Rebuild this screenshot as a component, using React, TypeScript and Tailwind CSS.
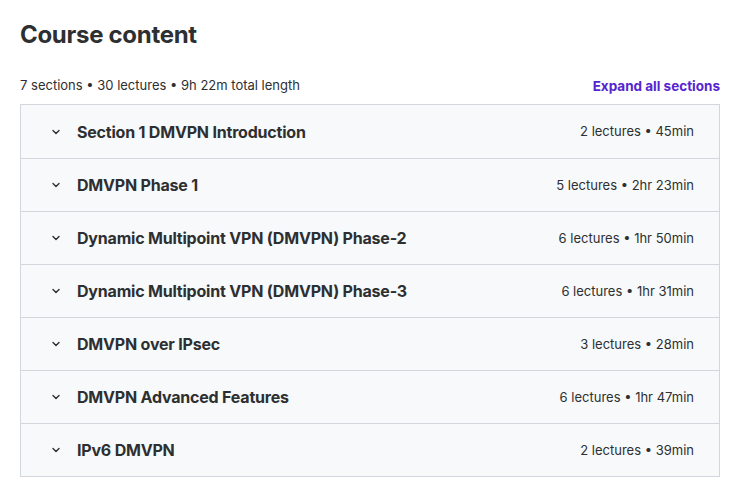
import React from "react";

const sections = [
  { title: "Section 1 DMVPN Introduction", meta: "2 lectures • 45min" },
  { title: "DMVPN Phase 1", meta: "5 lectures • 2hr 23min" },
  { title: "Dynamic Multipoint VPN (DMVPN) Phase-2", meta: "6 lectures • 1hr 50min" },
  { title: "Dynamic Multipoint VPN (DMVPN) Phase-3", meta: "6 lectures • 1hr 31min" },
  { title: "DMVPN over IPsec", meta: "3 lectures • 28min" },
  { title: "DMVPN Advanced Features", meta: "6 lectures • 1hr 47min" },
  { title: "IPv6 DMVPN", meta: "2 lectures • 39min" },
];

function Chevron() {
  return (
    <svg width="12" height="12" viewBox="0 0 12 12" fill="none" className="text-[#2d2f31]">
      <path d="M3 4.5 L6 7.5 L9 4.5" stroke="currentColor" strokeWidth="1.4" strokeLinecap="round" strokeLinejoin="round" />
    </svg>
  );
}

export default function App() {
  return (
    <div className="min-h-screen bg-white pl-5 pr-[22px] pt-[19px] font-['Inter',sans-serif] text-[#2d2f31]">
      <h2 className="text-[24px] font-bold leading-[32px] tracking-[-0.3px]">Course content</h2>
      <div className="mt-[25px] flex items-center justify-between">
        <span className="text-[13px]">7 sections • 30 lectures • 9h 22m total length</span>
        <button className="text-[13.5px] font-bold text-[#5624d0]">Expand all sections</button>
      </div>
      <div className="mt-[8px] border border-[#d1d7dc]">
        {sections.map((s, i) => (
          <div
            key={i}
            className={`flex h-[53px] items-center justify-between bg-[#f7f9fa] pl-[29px] pr-[25px] ${i > 0 ? "border-t border-[#d1d7dc]" : ""}`}
          >
            <div className="flex items-center gap-[15px]">
              <Chevron />
              <span className="text-[16px] font-bold tracking-[-0.2px]">{s.title}</span>
            </div>
            <span className="text-[13px]">{s.meta}</span>
          </div>
        ))}
      </div>
    </div>
  );
}
